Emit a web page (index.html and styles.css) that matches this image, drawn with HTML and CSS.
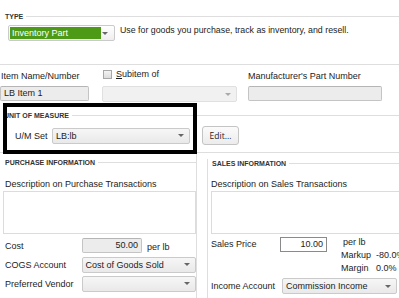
FILE: index.html
```html
<!DOCTYPE html>
<html lang="en">
<head>
    <meta charset="UTF-8">
    <meta name="viewport" content="width=device-width, initial-scale=1.0">
    <title>New Item</title>
    <link rel="stylesheet" href="styles.css">
</head>
<body>
<div class="page">

    <!-- Type -->
    <div class="type-sec">
        <div class="sec-head">TYPE</div>
        <div class="type-row">
            <div class="select green"><span class="green-val">Inventory Part</span></div>
            <p class="type-desc">Use for goods you purchase, track as inventory, and resell.</p>
        </div>
    </div>

    <!-- Name row -->
    <div class="name-row">
        <div class="field f-name">
            <div class="lbl">Item Name/Number</div>
            <div class="input gray">LB Item 1</div>
        </div>
        <div class="field f-sub">
            <div class="lbl check"><span class="box"></span><span><u>S</u>ubitem of</span></div>
            <div class="select disabled"></div>
        </div>
        <div class="field f-mpn">
            <div class="lbl">Manufacturer's Part Number</div>
            <div class="input gray"></div>
        </div>
    </div>

    <!-- Unit of measure -->
    <div class="um-sec">
        <div class="sec-head">UNIT OF MEASURE</div>
        <div class="um-row">
            <span class="um-lbl">U/M Set</span>
            <div class="select um-select">LB:lb</div>
            <button class="btn" type="button">Edit...</button>
        </div>
    </div>

    <!-- Purchase / Sales -->
    <div class="info">
        <div class="col purchase">
            <div class="sec-head">PURCHASE INFORMATION</div>
            <div class="desc-lbl">Description on Purchase Transactions</div>
            <div class="textarea"></div>
            <div class="frow">
                <span class="flbl">Cost</span>
                <div class="input gray num">50.00</div>
                <span class="unit">per lb</span>
            </div>
            <div class="frow">
                <span class="flbl">COGS Account</span>
                <div class="select wide">Cost of Goods Sold</div>
            </div>
            <div class="frow">
                <span class="flbl">Preferred Vendor</span>
                <div class="select wide"></div>
            </div>
        </div>
        <div class="col sales">
            <div class="sales-box">
                <div class="sec-head legend">SALES INFORMATION</div>
                <div class="desc-lbl s">Description on Sales Transactions</div>
                <div class="textarea s"></div>
                <div class="price-row">
                    <span class="plbl">Sales Price</span>
                    <div class="input num white">10.00</div>
                    <div class="notes">
                        <div>per lb</div>
                        <div>Markup&nbsp; -80.0%</div>
                        <div>Margin&nbsp;&nbsp; 0.0%</div>
                    </div>
                </div>
                <div class="frow income">
                    <span class="ilbl">Income Account</span>
                    <div class="select wide">Commission Income</div>
                </div>
            </div>
        </div>
    </div>

    <div class="highlight"></div>
</div>
</body>
</html>
```

FILE: styles.css
```css
body {
    margin: 0;
    font-family: "Liberation Sans", Arial, sans-serif;
    font-size: 9px;
    color: #1c1c1c;
    background-color: #fff;
}
.page {
    position: relative;
    width: 399px;
    height: 298px;
    overflow: hidden;
}
.sec-head {
    display: flex;
    align-items: center;
    gap: 3px;
    height: 9px;
    line-height: 9px;
    font-size: 7px;
    font-weight: bold;
    color: #333;
}
.sec-head::after {
    content: "";
    flex: 1;
    border-top: 1px solid #dedede;
}

/* controls */
.select {
    box-sizing: border-box;
    height: 16px;
    display: flex;
    align-items: center;
    padding-left: 3px;
    border: 1px solid #cacaca;
    border-radius: 2px;
    background: linear-gradient(#f6f6f6, #e9e9e9);
    color: #1c1c1c;
    white-space: nowrap;
}
.select::after {
    content: "";
    margin-left: auto;
    margin-right: 5px;
    border-left: 3px solid transparent;
    border-right: 3px solid transparent;
    border-top: 3px solid #666;
}
.select.disabled {
    background: #f1f1f1;
    border-color: #e0e0e0;
}
.select.disabled::after {
    border-top-color: #aaa;
}
.input {
    box-sizing: border-box;
    height: 15px;
    line-height: 13px;
    padding: 0 3px;
    border: 1px solid #c4c4c4;
    border-radius: 2px;
}
.input.gray {
    background-color: #ececec;
    border-top-color: #b5b5b5;
}
.input.white {
    background-color: #fff;
    border-color: #8a8a8a;
    border-radius: 0;
}
.input.num {
    text-align: right;
}

/* type */
.type-sec {
    box-sizing: border-box;
    height: 65px;
    padding: 12px 0 0 5px;
    border-bottom: 1px solid #dedede;
}
.type-row {
    display: flex;
    margin-top: 4px;
    padding-left: 3px;
}
.select.green {
    width: 107px;
    padding: 1px;
    background: linear-gradient(#fff, #eee);
}
.green-val {
    width: 89px;
    height: 12px;
    line-height: 12px;
    padding-left: 2px;
    background-color: #4d9a17;
    color: #fff;
}
.type-desc {
    margin: 0 0 0 5px;
    line-height: 11px;
    font-size: 8.8px;
}

/* name row */
.name-row {
    display: flex;
    padding-top: 6px;
    height: 30px;
}
.lbl {
    height: 11px;
    line-height: 11px;
    margin-bottom: 4px;
}
.f-name {
    width: 89px;
}
.f-name .lbl {
    padding-left: 1px;
}
.f-sub {
    width: 135px;
    margin-left: 13px;
}
.check {
    display: flex;
    align-items: center;
    gap: 4px;
    padding-left: 1px;
    margin-top: -2px;
    margin-bottom: 6px;
}
.box {
    width: 7px;
    height: 7px;
    border: 1px solid #a8a8a8;
    background: linear-gradient(#f4f4f4, #dcdcdc);
}
.f-mpn {
    width: 134px;
    margin-left: 11px;
}

/* unit of measure */
.um-sec {
    box-sizing: border-box;
    height: 52px;
    padding-top: 10px;
    padding-left: 4px;
    border-bottom: 1px solid #dedede;
}
.um-row {
    display: flex;
    align-items: center;
    margin-top: 6px;
}
.um-lbl {
    width: 37px;
    padding-left: 11px;
}
.um-select {
    width: 138px;
}
.btn {
    margin-left: 12px;
    width: 37px;
    height: 19px;
    padding: 0;
    border: 1px solid #c4c4c4;
    border-radius: 3px;
    background: linear-gradient(#fbfbfb, #ececec);
    font-family: "Open Sans", "Liberation Sans", sans-serif;
    font-size: 8.5px;
    color: #222;
}

/* purchase / sales */
.info {
    display: flex;
}
.col.purchase {
    box-sizing: border-box;
    width: 197px;
    height: 150px;
    padding: 5px 0 0 5px;
    border-right: 1px solid #dedede;
}
.desc-lbl {
    height: 11px;
    line-height: 11px;
    margin-top: 12px;
}
.textarea {
    box-sizing: border-box;
    height: 43px;
    margin: 1px 0 0 -2px;
    border: 1px solid #dcdcdc;
    background-color: #fff;
}
.frow {
    display: flex;
    align-items: center;
    height: 19px;
    white-space: nowrap;
}
.textarea + .frow {
    margin-top: 2px;
}
.flbl {
    width: 77px;
}
.frow .num {
    width: 60px;
}
.unit {
    margin-left: 5px;
    margin-top: 3px;
}
.select.wide {
    width: 115px;
}
.col.sales {
    flex: 1;
    padding: 6px 0 0 10px;
}
.sales-box {
    height: 140px;
    border-left: 1px solid #dedede;
}
.legend::before {
    content: "";
    width: 1px;
}
.desc-lbl.s {
    margin-top: 11px;
    padding-left: 3px;
}
.textarea.s {
    margin: 1px 0 0 3px;
    border-right: none;
}
.price-row {
    display: flex;
    margin-top: 2px;
    padding-left: 3px;
    white-space: nowrap;
}
.plbl {
    width: 69px;
    line-height: 15px;
    margin-top: 1px;
}
.price-row .num {
    width: 47px;
    margin-top: 1px;
}
.notes {
    margin-left: 14px;
    line-height: 13px;
}
.notes div:first-child {
    padding-left: 2px;
}
.frow.income {
    margin-top: 0;
    padding-left: 3px;
    height: 22px;
}
.ilbl {
    width: 71px;
}

/* highlight annotation drawn over the form */
.highlight {
    position: absolute;
    left: 3px;
    top: 103px;
    width: 186px;
    height: 43px;
    border: 4px solid #000;
}
```
